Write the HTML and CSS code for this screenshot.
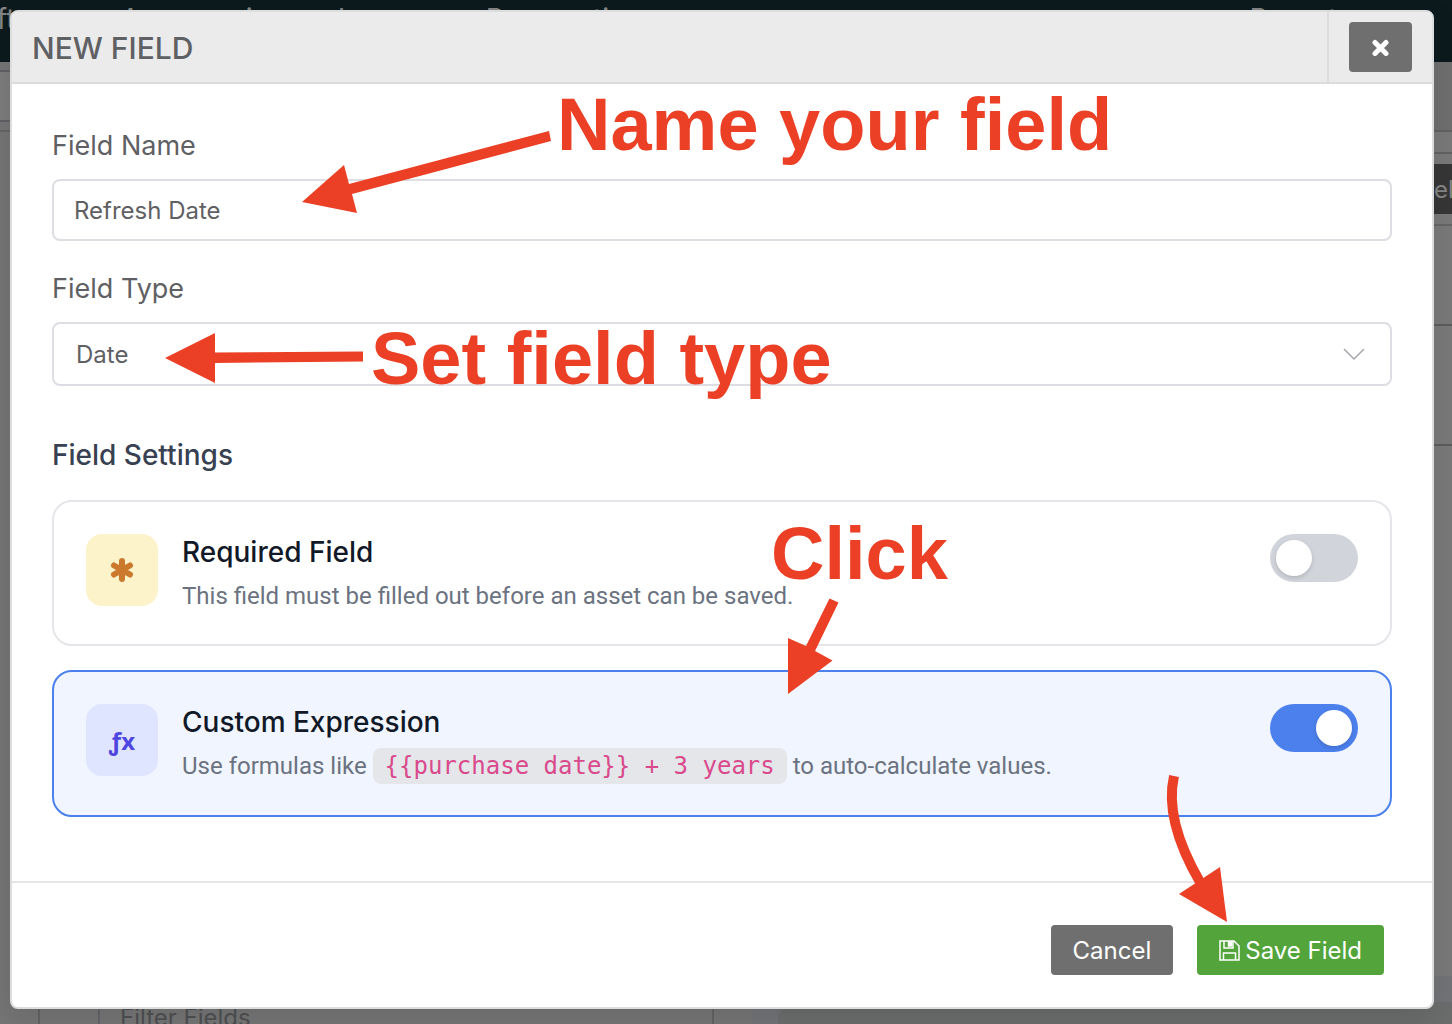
FILE: index.html
```html
<!DOCTYPE html>
<html lang="en">
  <head>
    <meta charset="UTF-8" />
    <meta name="viewport" content="width=device-width, initial-scale=1.0" />
    <title>New Field</title>
    <link rel="stylesheet" href="styles.css">
  </head>
  <body>
    <!-- Page behind the modal -->
    <div class="page">
      <nav class="topnav">
        <a href="#">Software</a>
        <a href="#">Accessories</a>
        <a href="#">Leases</a>
        <a href="#">Reservations</a>
        <a href="#" class="nav-right">Reports</a>
      </nav>
      <div class="page-body">
        <div class="side side-left">
          <div class="side-tab"></div>
          <div class="side-line"></div>
        </div>
        <div class="side side-right">
          <div class="side-head"></div>
          <div class="side-tab"></div>
          <div class="side-button">el</div>
          <div class="side-row"></div>
          <div class="side-row side-row-small"></div>
        </div>
      </div>
      <div class="page-bottom">
        <div class="filter-panel">
          <div class="filter-box">Filter Fields</div>
        </div>
        <div class="preview-panel">
          <div class="preview-box"></div>
        </div>
      </div>
    </div>

    <!-- Modal -->
    <form class="modal" role="dialog" aria-labelledby="modalTitle">
      <header class="modal-header">
        <h1 id="modalTitle">NEW FIELD</h1>
        <div class="modal-close">
          <button type="button" class="btn btn-grey" aria-label="Close">
            <svg width="19" height="17" viewBox="0 0 19 17">
              <path d="M4 3.500l11 11M15 3.500L4 14.500" stroke="#fff" stroke-width="5" stroke-linecap="round" />
            </svg>
          </button>
        </div>
      </header>

      <div class="modal-body">
        <label for="fieldName">Field Name</label>
        <input type="text" id="fieldName" class="control" value="Refresh Date" />

        <label for="fieldType">Field Type</label>
        <div class="select-wrap">
          <select id="fieldType" class="control">
            <option>Date</option>
          </select>
          <svg class="chevron" width="22" height="14" viewBox="0 0 22 14">
            <path d="M1 2l10 10 10-10" fill="none" stroke="#a6a6ae" stroke-width="1.500" />
          </svg>
        </div>

        <h2>Field Settings</h2>

        <div class="setting">
          <div class="setting-icon icon-yellow">
            <svg width="24" height="24" viewBox="0 0 24 24">
              <path d="M12 3v18M4 7.500l16 9M20 7.500l-16 9" stroke="#cb7a2d" stroke-width="6" stroke-linecap="round" />
            </svg>
          </div>
          <div class="setting-text">
            <label for="required">Required Field</label>
            <p>This field must be filled out before an asset can be saved.</p>
          </div>
          <input type="checkbox" id="required" class="switch" />
        </div>

        <div class="setting setting-active">
          <div class="setting-icon icon-indigo">ƒx</div>
          <div class="setting-text">
            <label for="expression">Custom Expression</label>
            <p>Use formulas like <code>{{purchase date}} + 3 years</code> to auto-calculate values.</p>
          </div>
          <input type="checkbox" id="expression" class="switch" checked />
        </div>
      </div>

      <footer class="modal-footer">
        <button type="button" class="btn btn-grey">Cancel</button>
        <button type="submit" class="btn btn-green">
          <svg width="21" height="21" viewBox="0 0 21 21" fill="none" stroke="#fff" stroke-width="1.500">
            <path d="M1 1h14l5 5v14H1zM4.500 20v-7h12v7M5 1v7h9V1" />
            <path d="M9.500 2h3v4h-3z" fill="#fff" />
          </svg>
          Save Field
        </button>
      </footer>
    </form>

    <!-- Callouts -->
    <div class="callouts">
      <svg width="1452" height="1024" viewBox="0 0 1452 1024" fill="#eb4025">
        <path d="M302 202L344 165L349 184L549 131L551 141L352 194L357 213Z" />
        <path d="M165 358L215 333V352.500L363 351.500V361.500L215 363V383Z" />
        <path d="M788 694V638L806 646L829.500 598.500L838.500 602.500L815 651L832.500 660.500Z" />
        <path d="M1174 776Q1164 820 1200 882" fill="none" stroke="#eb4025" stroke-width="10" />
        <path d="M1227 922L1179 894L1220 867Z" />
      </svg>
      <span class="callout callout-name">Name your field</span>
      <span class="callout callout-type">Set field type</span>
      <span class="callout callout-click">Click</span>
    </div>
  </body>
</html>
```

FILE: styles.css
```css
* {
  box-sizing: border-box;
}

body {
  margin: 0;
  font-family: Inter, "Liberation Sans", sans-serif;
  font-size: 24px;
  color: #5f6063;
  background: #757575;
}

/* page behind the modal */
.page {
  display: flex;
  flex-direction: column;
  height: 100vh;
  overflow: hidden;
}

.topnav {
  display: flex;
  gap: 54px;
  height: 62px;
  padding-right: 100px;
  background: #0c1a1e;
  font-size: 28px;
  line-height: 38px;
}

.topnav a {
  color: #858585;
  text-decoration: none;
}

.topnav a:first-child {
  margin: 0 -14px 0 -38px;
}

.topnav .nav-right {
  margin-left: auto;
}

.page-body {
  display: flex;
  flex: 1;
  justify-content: space-between;
}

.side {
  width: 18px;
}

.side-left {
  padding-top: 8px;
}

.side-left .side-tab {
  height: 52px;
  border-top: 2px solid #606164;
  border-bottom: 2px solid #606164;
  background: #7c7c7c;
}

.side-left .side-line {
  height: 10px;
  border-bottom: 2px solid #646464;
}

.side-right {
  background: #797979;
}

.side-head {
  height: 70px;
  border-bottom: 2px solid #626262;
  background: #6f6f6f;
}

.side-right .side-tab {
  height: 22px;
  border-bottom: 2px solid #626262;
}

.side-button {
  height: 50px;
  margin-top: 10px;
  background: #363636;
  color: #858585;
  line-height: 52px;
}

.side-row {
  height: 102px;
  border-top: 2px solid #656565;
  border-bottom: 2px solid #5c5c5c;
  margin-top: 10px;
}

.side-row-small {
  height: 120px;
  margin-top: 0;
  border-top: 0;
}

.page-bottom {
  display: flex;
  gap: 38px;
  height: 48px;
  padding-left: 38px;
}

.filter-panel {
  width: 676px;
  padding-left: 58px;
  border-left: 2px solid #636363;
  border-right: 2px solid #636363;
}

.filter-box {
  padding: 26px 0 0 20px;
  border-left: 2px solid #636369;
  color: #4e4f51;
  line-height: 32px;
}

.preview-panel {
  flex: 1;
  padding: 26px 0 0 26px;
  background: #727376;
}

.preview-box {
  height: 22px;
  border-top-left-radius: 20px;
  background: #6b6d6c;
}

/* modal */
.modal {
  position: absolute;
  top: 10px;
  left: 10px;
  right: 18px;
  border: 2px solid #dcdddd;
  border-radius: 8px;
  background: #fff;
  box-shadow: 0 10px 30px rgba(0, 0, 0, 0.1);
  overflow: hidden;
}

.modal-header {
  display: flex;
  justify-content: space-between;
  height: 72px;
  border-bottom: 2px solid #dcdcdc;
  background: #ebebeb;
}

.modal-header h1 {
  margin: 0;
  padding-left: 20px;
  font-size: 30px;
  font-weight: 500;
  line-height: 72px;
}

.modal-close {
  padding: 10px 20px;
  border-left: 2px solid #dcdcdc;
}

.modal-body {
  display: flex;
  flex-direction: column;
  padding: 42px 40px 64px;
}

.modal-body label {
  font-size: 27px;
  line-height: 40px;
}

.control {
  width: 100%;
  height: 62px;
  margin: 13px 0 28px;
  padding: 0 20px;
  border: 2px solid #dddde3;
  border-radius: 8px;
  background: #fff;
  color: #5f6063;
  font: inherit;
}

.select-wrap {
  display: grid;
  align-items: center;
}

.select-wrap .control {
  grid-area: 1 / 1;
  height: 64px;
  margin: 13px 0 0;
  padding: 0 22px;
  appearance: none;
}

.chevron {
  grid-area: 1 / 1;
  justify-self: end;
  margin: 13px 27px 0 0;
  pointer-events: none;
}

.modal-body h2 {
  margin: 48px 0 24px;
  color: #374151;
  font-size: 28px;
  font-weight: 500;
  line-height: 42px;
}

.setting {
  display: flex;
  gap: 24px;
  align-items: flex-start;
  height: 146px;
  padding: 32px;
  border: 2px solid #e5e5ea;
  border-radius: 20px;
}

.setting-active {
  height: 147px;
  margin-top: 24px;
  border-color: #4c80ed;
  background: #f0f5ff;
}

.setting-icon {
  display: flex;
  align-items: center;
  justify-content: center;
  width: 72px;
  height: 72px;
  border-radius: 16px;
}

.icon-yellow {
  background: #fcf3cb;
}

.icon-indigo {
  background: #e0e5ff;
  color: #4f46e0;
  font-family: "Noto Sans", sans-serif;
  font-weight: 700;
}

.setting-text {
  flex: 1;
}

.setting-text label {
  display: block;
  color: #111827;
  font-size: 28px;
  font-weight: 500;
  line-height: 36px;
}

.setting-text p {
  margin: 8px 0 0;
  color: #6b7280;
  font-family: Roboto, sans-serif;
  line-height: 36px;
}

.setting-text code {
  padding: 4px 12px;
  border-radius: 8px;
  background: #e5e6ea;
  color: #d94a8c;
  font-family: "DejaVu Sans Mono", monospace;
  font-size: 24px;
}

.switch {
  appearance: none;
  display: flex;
  width: 88px;
  height: 48px;
  margin: 0;
  padding: 6px;
  border-radius: 24px;
  background: #d1d4db;
}

.switch::before {
  content: "";
  width: 36px;
  height: 36px;
  border-radius: 50%;
  background: #fff;
  box-shadow: 0 2px 4px rgba(0, 0, 0, 0.15);
}

.switch:checked {
  justify-content: flex-end;
  background: #4c80ed;
}

.modal-footer {
  display: flex;
  gap: 24px;
  justify-content: flex-end;
  padding: 42px 48px 32px;
  border-top: 2px solid #e5e5e8;
}

.btn {
  display: flex;
  gap: 5px;
  align-items: center;
  justify-content: center;
  height: 50px;
  padding: 0 22px;
  border: none;
  border-radius: 4px;
  color: #fff;
  font: inherit;
}

.btn-grey {
  background: #6f6f6f;
}

.btn-green {
  background: #52a43b;
}

/* callouts drawn over the modal */
.callouts {
  position: absolute;
  top: 0;
  left: 0;
  pointer-events: none;
}

.callouts svg {
  display: block;
}

.callout {
  position: absolute;
  color: #eb4025;
  font-family: "Liberation Sans", Arial, sans-serif;
  font-size: 74px;
  font-weight: 700;
  line-height: 84px;
  white-space: nowrap;
}

.callout-name {
  top: 83px;
  left: 557px;
}

.callout-type {
  top: 317px;
  left: 371px;
}

.callout-click {
  top: 512px;
  left: 771px;
}
```
